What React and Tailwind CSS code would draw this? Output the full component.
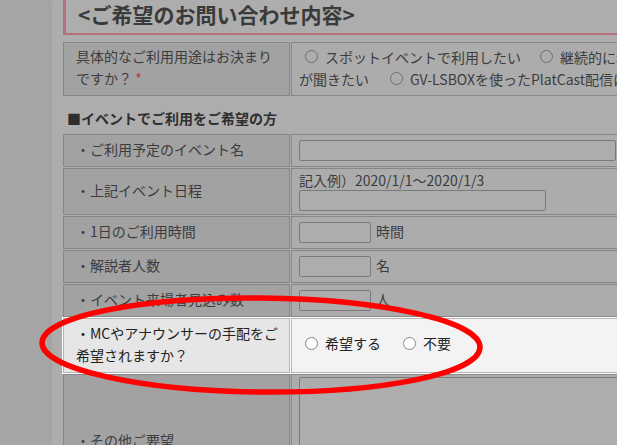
import React from 'react';

function Radio({ lit }) {
  return (
    <span
      className={
        'inline-block w-[13px] h-[13px] shrink-0 rounded-full border ' +
        (lit ? 'border-[#858585] bg-white' : 'border-[#6e6e6e] bg-[#adadad]')
      }
    />
  );
}

function Choice({ label, lit, className = '' }) {
  return (
    <span className={'inline-flex items-center gap-[7px] ' + className}>
      <Radio lit={lit} />
      <span>{label}</span>
    </span>
  );
}

function Box({ className = '' }) {
  return <div className={'h-[21px] rounded-[2px] border border-[#7a7a7a] bg-[#adadad] ' + className} />;
}

function Row({ label, h, children }) {
  return (
    <div className={'flex gap-[1px] ' + h}>
      <div className="w-[227px] shrink-0 flex items-center border border-[#878787] bg-[#a2a2a2] pl-[12px] pr-[8px] pb-[4px] text-[#3c3c3c]">
        {label}
      </div>
      <div className="flex-1 flex items-center border border-[#878787] bg-[#acacac] pl-[7px] text-[#3c3c3c]">
        {children}
      </div>
    </div>
  );
}

export default function App() {
  return (
    <div className="relative w-[617px] h-[445px] overflow-hidden bg-[#adadad] font-['Noto_Sans_CJK_JP','Noto_Sans',sans-serif] text-[14px] leading-[22px]">
      <div className="flex h-full">
        <div className="w-[49px] shrink-0 bg-[#a6a6a6] shadow-[1px_0_4px_rgba(0,0,0,0.12)]" />
        <div className="w-[860px] shrink-0 pl-[14px]">
          <div className="h-[35px] border-l-[3px] border-b-2 border-[#b5707b] pl-[12px] text-[21px] font-bold leading-[28px] text-[#3a3a3a]">
            &lt;ご希望のお問い合わせ内容&gt;
          </div>

          <div className="mt-[7px] flex flex-col gap-[1px]">
            <Row
              h="h-[54px]"
              label={
                <span>
                  具体的なご利用用途はお決まり
                  <br />
                  ですか？ <span className="text-[#b03a3a]">*</span>
                </span>
              }
            >
              <div className="flex flex-col whitespace-nowrap pb-[3px]">
                <div className="flex items-center pl-[6px]">
                  <Choice label="スポットイベントで利用したい" />
                  <Choice label="継続的に利用したい" className="ml-[19px]" />
                  <Choice label="料金やプランについて話" className="ml-[19px]" />
                </div>
                <div className="flex items-center">
                  <span>が聞きたい</span>
                  <Choice label="GV-LSBOXを使ったPlatCast配信について知りたい" className="ml-[21px]" />
                </div>
              </div>
            </Row>

            <div className="mt-[10px] mb-[4px] pl-[4px] font-bold text-[#2e2e2e]">■イベントでご利用をご希望の方</div>

            <Row h="h-[33px]" label="・ご利用予定のイベント名">
              <Box className="w-[317px]" />
            </Row>

            <Row h="h-[47px]" label="・上記イベント日程">
              <div className="flex flex-col">
                <span className="mb-[2px] leading-[16px]">記入例）2020/1/1～2020/1/3</span>
                <Box className="w-[247px]" />
              </div>
            </Row>

            <Row h="h-[33px]" label="・1日のご利用時間">
              <Box className="w-[72px]" />
              <span className="ml-[5px] mb-[4px]">時間</span>
            </Row>

            <Row h="h-[33px]" label="・解説者人数">
              <Box className="w-[72px]" />
              <span className="ml-[5px] mb-[4px]">名</span>
            </Row>

            <Row h="h-[33px]" label="・イベント来場者見込み数">
              <Box className="w-[72px]" />
              <span className="ml-[5px] mb-[4px]">人</span>
            </Row>

            <div className="-mx-[1px] -my-[1px] flex h-[57px] gap-[1px] bg-white p-[1px]">
              <div className="w-[227px] shrink-0 flex items-center border border-[#b4b4b4] bg-[#e6e6e6] pl-[12px] pb-[4px] text-[#222]">
                <span>
                  ・MCやアナウンサーの手配をご
                  <br />
                  希望されますか？
                </span>
              </div>
              <div className="flex-1 flex items-center border border-[#b4b4b4] bg-[#f3f3f3] pl-[13px] pb-[5px] text-[#222]">
                <Choice lit label="希望する" />
                <Choice lit label="不要" className="ml-[22px]" />
              </div>
            </div>

            <Row h="h-[136px]" label="・その他ご要望">
              <div className="self-start mt-[2px] h-[128px] w-[520px] rounded-[2px] border border-[#7a7a7a] bg-[#adadad]" />
            </Row>
          </div>
        </div>
      </div>

      <svg className="pointer-events-none absolute inset-0" width="617" height="445" viewBox="0 0 617 445">
        <ellipse
          cx="261"
          cy="345"
          rx="219"
          ry="47"
          fill="none"
          stroke="#ff0000"
          strokeWidth="5.5"
          transform="rotate(0.6 261 345)"
        />
      </svg>
    </div>
  );
}
